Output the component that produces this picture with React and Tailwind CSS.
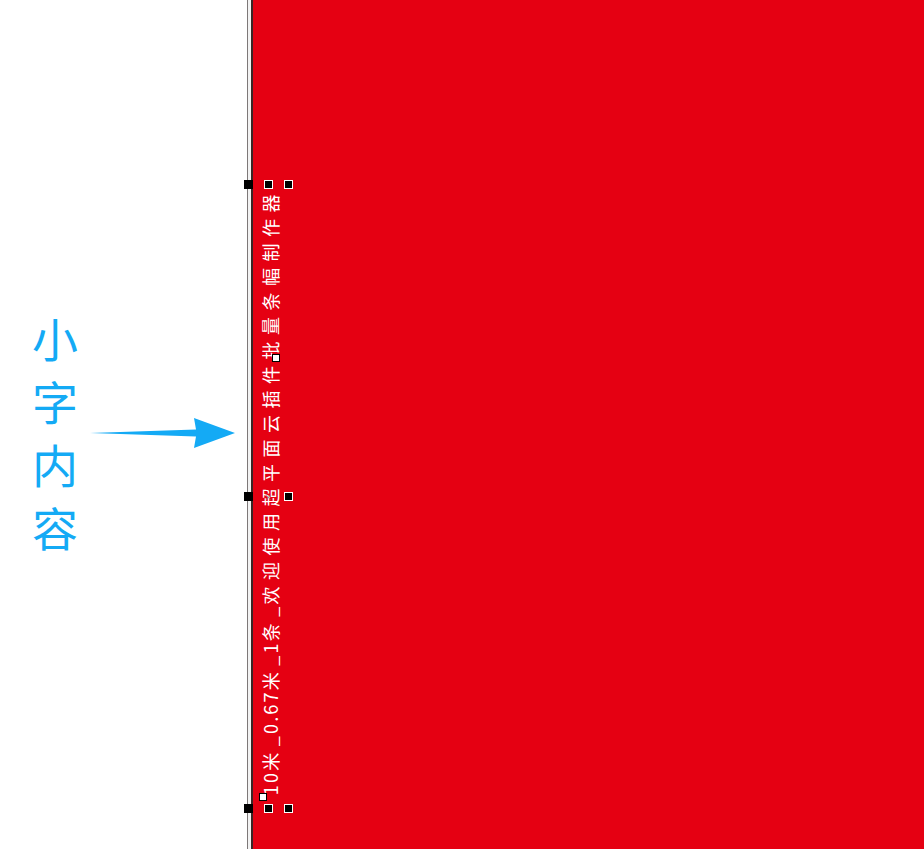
const label = ['小', '字', '内', '容'];
const text = '10米_0.67米_1条_欢迎使用超平面云插件批量条幅制作器';

export default function App() {
    return (
        <div className="relative flex h-[849px] w-[924px] overflow-hidden bg-white font-['Noto_Sans_CJK_SC','Noto_Sans',sans-serif]">
            {/* 左侧说明 */}
            <div className="flex w-[247px] shrink-0 items-center bg-white pl-[31px] pt-[14px]">
                <div className="flex w-[48px] flex-col items-center gap-[13px] text-[46px] leading-[50px] text-[#14aaf5]">
                    {label.map(c => (
                        <span key={c}>{c}</span>
                    ))}
                </div>
                <svg className="ml-[11px] mt-[2px]" width="146" height="32" viewBox="0 0 146 32">
                    <path d="M0 16 L106 12.5 L104 1 L145 16 L104 31 L106 19.5 Z" fill="#14aaf5" />
                </svg>
            </div>

            {/* 边线 */}
            <div className="w-px shrink-0 bg-[#7d7878]" />
            <div className="w-[3px] shrink-0 bg-[#f2f2f2]" />
            <div className="w-[2px] shrink-0 bg-[#3b2626]" />

            {/* 条幅 */}
            <div className="flex-1 bg-[#e50012] pl-[5px] pt-[188px]">
                <div className="flex w-[24px] justify-center">
                    <span className="rotate-180 whitespace-nowrap text-[18px] leading-[24px] text-white [text-orientation:sideways] [writing-mode:vertical-rl]">
                        {[...text].map((c, i) => (
                            <span key={i} className={/[\x00-\x7f]/.test(c) ? 'tracking-[2.2px]' : 'tracking-[6.5px]'}>
                                {c}
                            </span>
                        ))}
                    </span>
                </div>
            </div>

            {/* 选择框 */}
            <div className="absolute left-[244px] top-[180px] flex h-[633px] w-[49px] flex-col justify-between">
                <div className="flex gap-[11px]">
                    <Handle solid />
                    <Handle />
                    <Handle />
                </div>
                <div className="flex items-center gap-[11px]">
                    <Handle solid />
                    <div className="h-[9px] w-[9px] text-center text-[8px] leading-[9px] text-[#888]">×</div>
                    <Handle />
                </div>
                <div className="flex gap-[11px]">
                    <Handle solid />
                    <Handle />
                    <Handle />
                </div>
                <div className="absolute left-[15px] top-[613px] h-[8px] w-[8px] border border-black bg-white" />
                <div className="absolute left-[28px] top-[174px] h-[8px] w-[8px] border border-black bg-white" />
            </div>
        </div>
    );
}

function Handle({ solid }) {
    return (
        <div
            className={
                solid
                    ? 'h-[9px] w-[9px] bg-black'
                    : 'h-[9px] w-[9px] border border-white bg-black'
            }
        />
    );
}
